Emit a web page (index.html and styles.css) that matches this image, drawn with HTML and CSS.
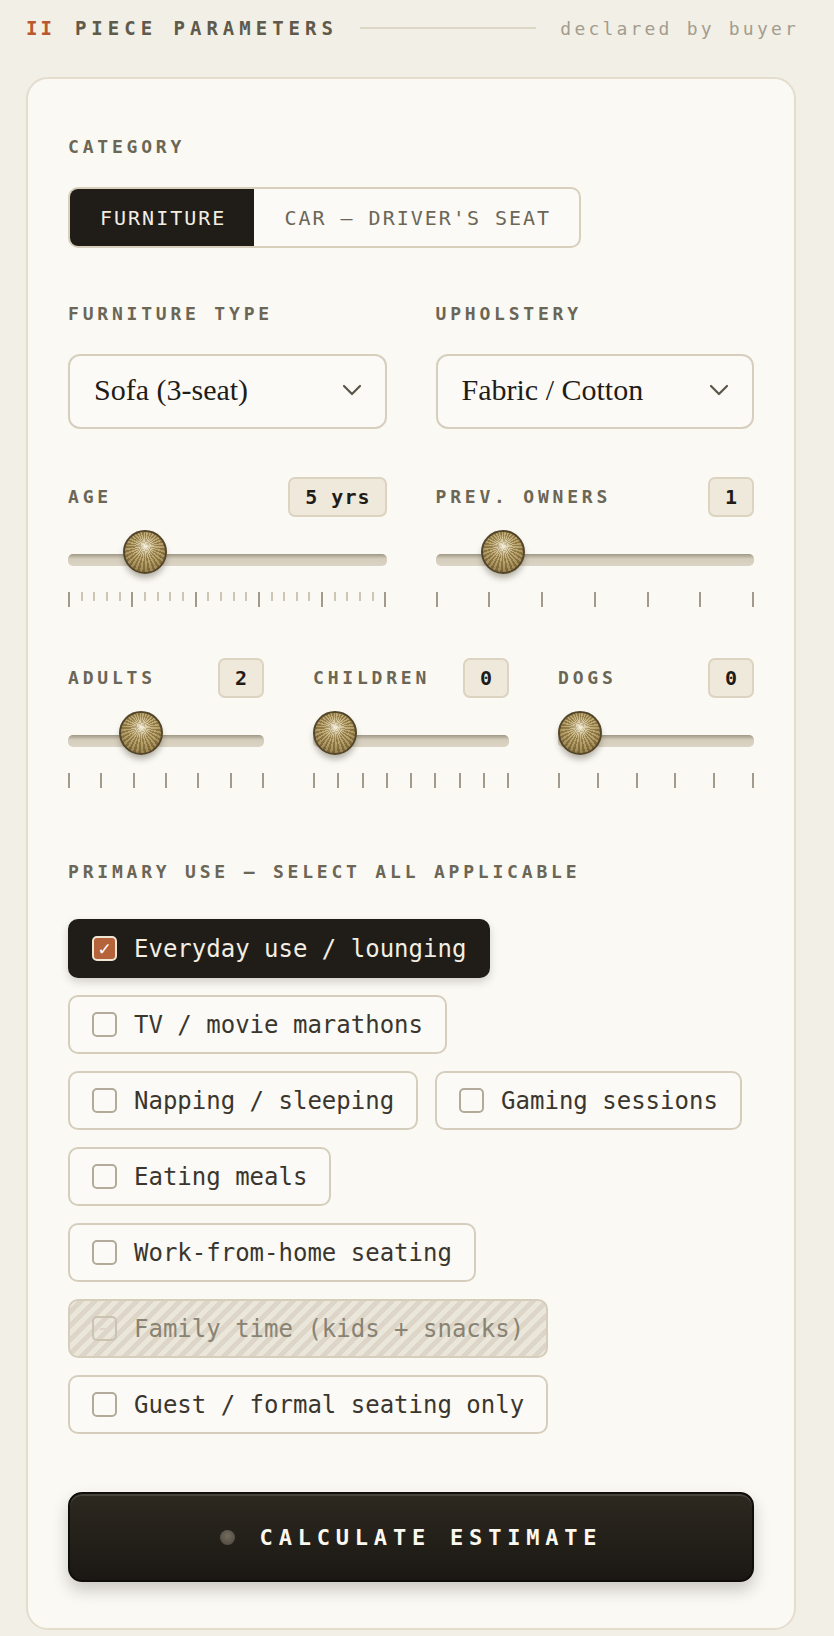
FILE: index.html
```html
<!DOCTYPE html>
<html lang="en">
<head>
    <meta charset="UTF-8">
    <meta name="viewport" content="width=device-width, initial-scale=1.0">
    <title>Piece Parameters</title>
    <link rel="stylesheet" href="styles.css">
</head>
<body>
    <div class="page">
        <header class="section-head">
            <span class="num">II</span>
            <span class="title">PIECE PARAMETERS</span>
            <span class="rule"></span>
            <span class="note">declared by buyer</span>
        </header>

        <div class="card">
            <div class="label">CATEGORY</div>
            <div class="segmented">
                <button class="seg active">FURNITURE</button>
                <button class="seg">CAR — DRIVER'S SEAT</button>
            </div>

            <div class="grid-2 types">
                <div>
                    <div class="label">FURNITURE TYPE</div>
                    <div class="select">
                        <span>Sofa (3-seat)</span>
                        <svg width="20" height="12" viewBox="0 0 20 12"><path d="M2 2 L10 10 L18 2" fill="none" stroke="#5a5548" stroke-width="2.2" stroke-linecap="round" stroke-linejoin="round"/></svg>
                    </div>
                </div>
                <div>
                    <div class="label">UPHOLSTERY</div>
                    <div class="select">
                        <span>Fabric / Cotton</span>
                        <svg width="20" height="12" viewBox="0 0 20 12"><path d="M2 2 L10 10 L18 2" fill="none" stroke="#5a5548" stroke-width="2.2" stroke-linecap="round" stroke-linejoin="round"/></svg>
                    </div>
                </div>
            </div>

            <div class="grid-2 slider-row first">
                <div class="slider-field" data-min="0" data-max="25" data-value="5" data-major="5">
                    <div class="slider-head">
                        <span class="label flat">AGE</span>
                        <span class="badge">5 yrs</span>
                    </div>
                    <div class="slider"><div class="track"></div><div class="thumb"></div></div>
                    <div class="ticks"></div>
                </div>
                <div class="slider-field" data-min="0" data-max="6" data-value="1">
                    <div class="slider-head">
                        <span class="label flat">PREV. OWNERS</span>
                        <span class="badge">1</span>
                    </div>
                    <div class="slider"><div class="track"></div><div class="thumb"></div></div>
                    <div class="ticks"></div>
                </div>
            </div>

            <div class="grid-3 slider-row">
                <div class="slider-field" data-min="0" data-max="6" data-value="2">
                    <div class="slider-head">
                        <span class="label flat">ADULTS</span>
                        <span class="badge">2</span>
                    </div>
                    <div class="slider"><div class="track"></div><div class="thumb"></div></div>
                    <div class="ticks"></div>
                </div>
                <div class="slider-field" data-min="0" data-max="8" data-value="0">
                    <div class="slider-head">
                        <span class="label flat">CHILDREN</span>
                        <span class="badge">0</span>
                    </div>
                    <div class="slider"><div class="track"></div><div class="thumb"></div></div>
                    <div class="ticks"></div>
                </div>
                <div class="slider-field" data-min="0" data-max="5" data-value="0">
                    <div class="slider-head">
                        <span class="label flat">DOGS</span>
                        <span class="badge">0</span>
                    </div>
                    <div class="slider"><div class="track"></div><div class="thumb"></div></div>
                    <div class="ticks"></div>
                </div>
            </div>

            <div class="uses">
                <div class="label">PRIMARY USE — SELECT ALL APPLICABLE</div>
                <div class="chips">
                    <label class="chip checked"><span class="box">✓</span>Everyday use / lounging</label>
                    <label class="chip"><span class="box"></span>TV / movie marathons</label>
                    <label class="chip"><span class="box"></span>Napping / sleeping</label>
                    <label class="chip"><span class="box"></span>Gaming sessions</label>
                    <label class="chip"><span class="box"></span>Eating meals</label>
                    <label class="chip"><span class="box"></span>Work-from-home seating</label>
                    <label class="chip disabled"><span class="box"><i></i></span>Family time (kids + snacks)</label>
                    <label class="chip"><span class="box"></span>Guest / formal seating only</label>
                </div>
            </div>

            <button class="calc"><span class="dot"></span>CALCULATE ESTIMATE</button>
        </div>
    </div>
    <script>
        // build tick marks and place thumbs from each slider's data
        document.querySelectorAll(".slider-field").forEach((field) => {
            const min = +field.dataset.min;
            const max = +field.dataset.max;
            const value = +field.dataset.value;
            const major = +(field.dataset.major || 1);
            field.querySelector(".thumb").style.setProperty("--pos", (value - min) / (max - min));
            const ticks = field.querySelector(".ticks");
            for (let i = min; i <= max; i++) {
                const tick = document.createElement("span");
                tick.className = (i - min) % major === 0 ? "tick" : "tick minor";
                ticks.appendChild(tick);
            }
        });
    </script>
</body>
</html>
```

FILE: styles.css
```css
body {
    margin: 0;
    background: #f2efe6;
    font-family: "DejaVu Sans Mono", "Liberation Mono", monospace;
    color: #1f1c17;
}
.page {
    width: 770px;
    margin-left: 26px;
    padding: 16px 0 6px;
}

/* section heading */
.section-head {
    display: flex;
    align-items: center;
    height: 24px;
    margin-bottom: 37px;
}
.num, .title {
    font-size: 19px;
    font-weight: 700;
    letter-spacing: 5px;
}
.num {
    color: #b9582e;
    letter-spacing: 3px;
    margin-right: 20px;
}
.title {
    color: #5f5a4b;
}
.rule {
    flex: 1;
    height: 2px;
    background: #ddd6c6;
    margin: 0 24px 0 22px;
}
.note {
    font-size: 18px;
    letter-spacing: 3.2px;
    color: #a39d8e;
    margin-right: -3px;
}

/* card */
.card {
    background: #faf9f4;
    border: 2px solid #e4ddce;
    border-radius: 22px;
    padding: 56px 40px 46px;
}
.label {
    font-size: 18px;
    line-height: 24px;
    font-weight: 700;
    letter-spacing: 3.8px;
    color: #6b6656;
    margin-bottom: 28px;
}
.label.flat {
    margin-bottom: 0;
}

/* category toggle */
.segmented {
    display: inline-flex;
    height: 61px;
    box-sizing: border-box;
    border: 2px solid #d8cfbd;
    border-radius: 10px;
    overflow: hidden;
    background: #fbfaf6;
}
.seg {
    font: inherit;
    font-size: 20px;
    letter-spacing: 2px;
    padding: 0 28px 0 30px;
    border: none;
    background: none;
    color: #6b6656;
}
.seg.active {
    background: #201d18;
    color: #f2ede1;
}

.grid-2 {
    display: grid;
    grid-template-columns: 1fr 1fr;
    column-gap: 49px;
}
.grid-3 {
    display: grid;
    grid-template-columns: repeat(3, 1fr);
    column-gap: 49px;
}
.types {
    margin-top: 54px;
}

/* dropdowns */
.select {
    height: 75px;
    box-sizing: border-box;
    display: flex;
    align-items: center;
    justify-content: space-between;
    padding: 0 23px 4px 24px;
    border: 2px solid #d7cfbe;
    border-radius: 12px;
    background: #fbfaf7;
    font-family: "Liberation Serif", serif;
    font-size: 30px;
    color: #1f1c17;
}

/* sliders */
.slider-row {
    margin-top: 51px;
}
.slider-row.first {
    margin-top: 48px;
}
.slider-head {
    display: flex;
    justify-content: space-between;
    align-items: center;
    height: 40px;
}
.badge {
    height: 40px;
    box-sizing: border-box;
    display: flex;
    align-items: center;
    padding: 0 14px 0 15px;
    border: 2px solid #ddd3c1;
    border-radius: 7px;
    background: #efe9dc;
    font-size: 20px;
    font-weight: 700;
    letter-spacing: 1px;
    color: #1f1c17;
}
.slider {
    position: relative;
    height: 44px;
    margin-top: 13px;
}
.track {
    position: absolute;
    left: 0;
    right: 0;
    top: 24px;
    height: 12px;
    border-radius: 5px;
    background: linear-gradient(#9f9886, #d5cdbc 40%, #dbd4c4);
}
.thumb {
    position: absolute;
    top: 0;
    left: calc(var(--pos, 0) * (100% - 44px));
    width: 44px;
    height: 44px;
    box-sizing: border-box;
    border-radius: 50%;
    border: 2px solid #54462a;
    background:
        radial-gradient(circle at 50% 36%, rgba(255, 252, 240, 0.9) 0, rgba(255, 250, 235, 0.35) 13%, rgba(255, 250, 235, 0) 34%),
        repeating-conic-gradient(from 0deg at 50% 36%, rgba(96, 74, 30, 0.42) 0deg 6deg, rgba(255, 240, 200, 0.12) 6deg 12deg),
        radial-gradient(circle at 50% 36%, #d2c293 0, #b29b62 45%, #8b7443 80%, #66552f 100%);
    box-shadow: 0 5px 6px -1px rgba(50, 40, 20, 0.35);
}
.ticks {
    display: flex;
    justify-content: space-between;
    align-items: flex-start;
    height: 15px;
    margin-top: 18px;
}
.tick {
    width: 2px;
    height: 15px;
    background: #a29b8b;
}
.tick.minor {
    height: 9px;
    background: #cec6b4;
}

/* primary use chips */
.uses {
    margin-top: 72px;
}
.uses .label {
    margin-bottom: 35px;
}
.chips {
    display: flex;
    flex-wrap: wrap;
    gap: 17px;
}
.chip {
    height: 59px;
    box-sizing: border-box;
    display: flex;
    align-items: center;
    gap: 17px;
    padding: 0 22px;
    border: 2px solid #d6cebd;
    border-radius: 10px;
    background: #fbfaf6;
    font-size: 24px;
    color: #3a362e;
    white-space: nowrap;
}
.box {
    flex: none;
    width: 25px;
    height: 25px;
    box-sizing: border-box;
    display: flex;
    align-items: center;
    justify-content: center;
    border: 2px solid #b3ab99;
    border-radius: 5px;
    font-family: "DejaVu Sans", sans-serif;
    font-size: 17px;
    font-weight: 700;
}
.chip.checked {
    background: #201d18;
    border-color: #201d18;
    color: #f3eee2;
    box-shadow: 0 4px 8px rgba(30, 25, 15, 0.18);
}
.chip.checked .box {
    background: #b5633a;
    border-color: #efe6d4;
    color: #fff;
}
.chip.disabled {
    background: repeating-linear-gradient(135deg, #ebe6da 0 5px, #ddd6c8 5px 10px);
    color: #898373;
}
.chip.disabled .box {
    border-color: #cbc3b2;
}
.chip.disabled .box i {
    width: 9px;
    height: 2px;
    background: #ddd6c8;
}

/* submit */
.calc {
    margin-top: 58px;
    width: 100%;
    height: 90px;
    display: flex;
    align-items: center;
    justify-content: center;
    gap: 25px;
    border: 2px solid #0f0d0b;
    border-radius: 14px;
    background: linear-gradient(#2d2920, #1b1814);
    box-shadow: inset 0 2px 0 rgba(255, 255, 255, 0.12), 0 8px 16px rgba(30, 25, 15, 0.22);
    font-family: "DejaVu Sans Mono", monospace;
    font-size: 22px;
    font-weight: 700;
    letter-spacing: 5.8px;
    color: #fbf8f0;
}
.dot {
    width: 15px;
    height: 15px;
    border-radius: 50%;
    background: radial-gradient(circle at 50% 40%, #736c5e, #4a453b);
}
```
